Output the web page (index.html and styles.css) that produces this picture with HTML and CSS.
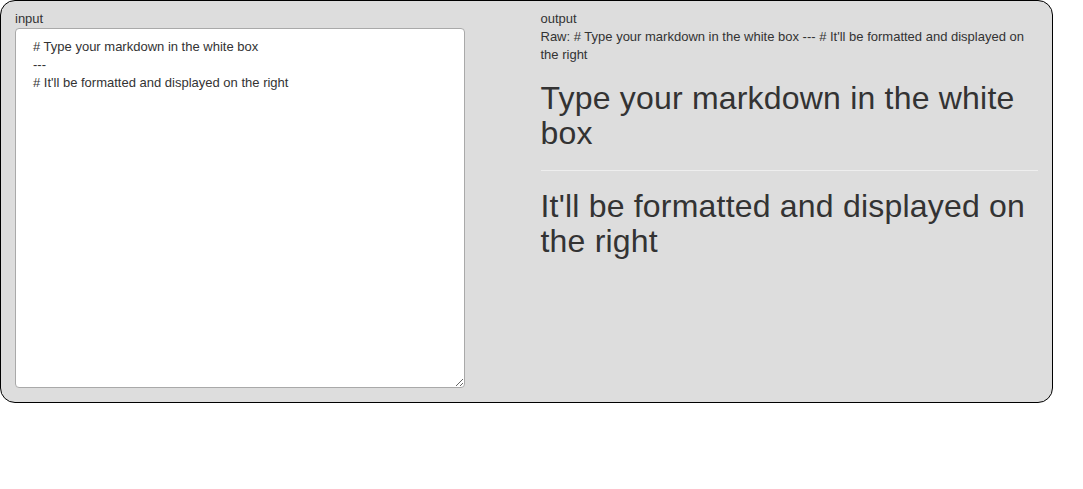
FILE: index.html
```html
<!DOCTYPE html>
<html>
<head>
<meta charset="utf-8">
<link rel="stylesheet" href="styles.css">
</head>
<body>
<div class="panel">
  <div class="col">
    <div class="label">input</div>
    <textarea class="editor"># Type your markdown in the white box
---
# It'll be formatted and displayed on the right</textarea>
  </div>
  <div class="col">
    <div class="label">output</div>
    <div class="raw">Raw: # Type your markdown in the white box --- # It'll be formatted and displayed on the right</div>
    <h1 class="heading">Type your markdown in the white box</h1>
    <hr class="rule">
    <h1 class="heading">It'll be formatted and displayed on the right</h1>
  </div>
</div>
</body>
</html>
```

FILE: styles.css
```css
html, body {
  margin: 0;
  padding: 0;
  background: #fff;
}
body {
  font-family: "Liberation Sans", Arial, Helvetica, sans-serif;
  font-size: 13px;
  line-height: 18px;
  color: #333;
}
.panel {
  box-sizing: border-box;
  width: 1053px;
  height: 403px;
  border: 1px solid #000;
  border-radius: 15px;
  background: #dddddd;
  display: grid;
  grid-template-columns: 1fr 1fr;
  padding-top: 9px;
}
.col {
  padding: 0 14px;
  min-width: 0;
}
.label {
  height: 18px;
}
.editor {
  display: block;
  box-sizing: border-box;
  width: 450px;
  height: 360px;
  margin: 0;
  border: 1px solid #a9a9a9;
  border-radius: 4px;
  background: #fff;
  padding: 9px 17px;
  font-family: "Liberation Sans", Arial, Helvetica, sans-serif;
  font-size: 13px;
  line-height: 18px;
  color: #333;
  resize: both;
  outline: none;
}
.raw {
  margin: 0;
}
.heading {
  font-family: "Liberation Sans", Arial, Helvetica, sans-serif;
  font-weight: 500;
  font-size: 32px;
  line-height: 35px;
  letter-spacing: 0.2px;
  margin: 17px 0 10px;
  color: #333;
}
.rule {
  border: 0;
  border-top: 1px solid #eee;
  margin: 19px 0 18px;
}
```
